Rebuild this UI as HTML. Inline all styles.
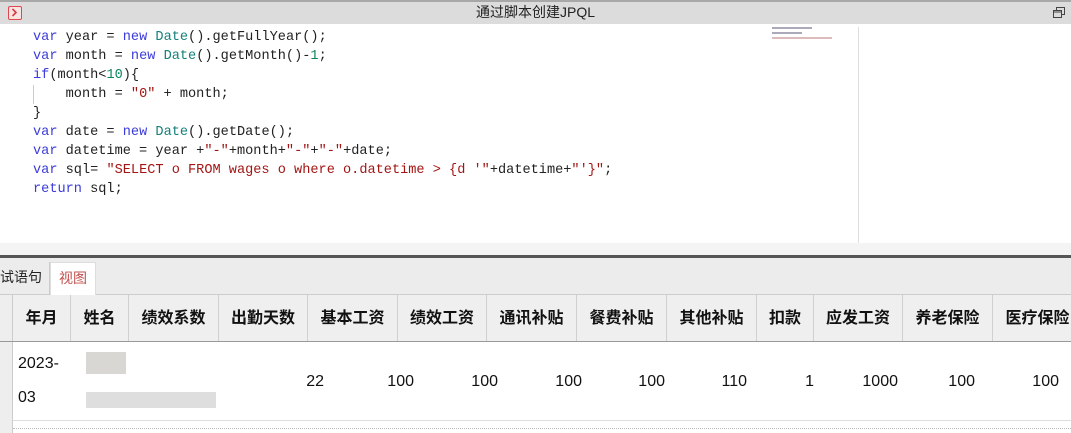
<!DOCTYPE html>
<html><head><meta charset="utf-8"><style>
*{margin:0;padding:0;box-sizing:border-box}
body{width:1071px;height:433px;overflow:hidden;background:#fff;position:relative;font-family:"Liberation Sans","Noto Sans CJK SC",sans-serif}
.abs{position:absolute}
#title{left:0;top:0;width:1071px;height:24px;background:#dcdcdc;border-top:2px solid #a8a8a8;font-size:14px;text-align:center;line-height:21px;color:#222}
.code{position:absolute;left:33px;font-family:"Liberation Mono",monospace;font-size:13.6px;color:#222;white-space:pre;line-height:19px}
.k{color:#3b3bdc}.t{color:#16807a}.s{color:#a31515}.n{color:#098658}
.th{position:absolute;top:295px;height:46px;border-right:1px solid #d0d0d0;background:#efefef;font-weight:bold;font-size:16px;text-align:center;line-height:48px;color:#111}
.td{position:absolute;top:373px;font-size:16px;color:#111;text-align:right;line-height:18px}
</style></head><body>
<div id="title" class="abs">通过脚本创建JPQL</div>
<div class="abs" style="left:8px;top:6px;width:14px;height:14px;border:1.5px solid #e0474c;border-radius:2px;background:#fbe3e3"><svg width="11" height="11" style="position:absolute;left:0;top:0"><path d="M3.5 2 L7 5.5 L3.5 9" stroke="#d83a3f" stroke-width="1.6" fill="none"/></svg></div>
<svg class="abs" style="left:1053px;top:7px" width="12" height="12"><rect x="3.5" y="0.5" width="8" height="7" fill="none" stroke="#444"/><rect x="0.5" y="3.5" width="8" height="7" fill="#dcdcdc" stroke="#444"/><line x1="1" y1="5" x2="8" y2="5" stroke="#444"/></svg>
<div class="code" style="top:28px"><span class="k">var</span> year = <span class="k">new</span> <span class="t">Date</span>().getFullYear();
<span class="k">var</span> month = <span class="k">new</span> <span class="t">Date</span>().getMonth()-<span class="n">1</span>;
<span class="k">if</span>(month&lt;<span class="n">10</span>){
    month = <span class="s">"0"</span> + month;
}
<span class="k">var</span> date = <span class="k">new</span> <span class="t">Date</span>().getDate();
<span class="k">var</span> datetime = year +<span class="s">"-"</span>+month+<span class="s">"-"</span>+<span class="s">"-"</span>+date;
<span class="k">var</span> sql= <span class="s">"SELECT o FROM wages o where o.datetime &gt; {d '"</span>+datetime+<span class="s">"'}"</span>;
<span class="k">return</span> sql;</div>
<div class="abs" style="left:33px;top:85px;width:1px;height:19px;background:#ccc"></div>
<div class="abs" style="left:772px;top:27px;width:40px;height:2px;background:#aab"></div>
<div class="abs" style="left:772px;top:32px;width:30px;height:2px;background:#aab"></div>
<div class="abs" style="left:772px;top:37px;width:60px;height:2px;background:#dbb"></div>
<div class="abs" style="left:858px;top:27px;width:1px;height:216px;background:#ddd"></div>
<div class="abs" style="left:0;top:243px;width:1071px;height:12px;background:#f4f4f4"></div>
<div class="abs" style="left:0;top:255px;width:1071px;height:3px;background:#555"></div>
<div class="abs" style="left:0;top:258px;width:1071px;height:37px;background:#ececec;border-bottom:1px solid #ccc"></div>
<div class="abs" style="left:0;top:262px;width:50px;height:32px;font-size:14px;line-height:30px;color:#222;border-right:1px solid #ccc">试语句</div>
<div class="abs" style="left:50px;top:262px;width:46px;height:33px;background:#fff;border:1px solid #ddd;border-bottom:none;font-size:14px;line-height:30px;color:#c0504d;text-align:center">视图</div>
<div class="abs" style="left:0;top:295px;width:13px;height:138px;background:#eee;border-right:1px solid #ccc"></div>
<div class="abs" style="left:0;top:341px;width:1071px;height:1px;background:#999"></div>
<div class="th" style="left:13px;width:58px">年月</div>
<div class="th" style="left:71px;width:58px">姓名</div>
<div class="th" style="left:129px;width:90px">绩效系数</div>
<div class="th" style="left:219px;width:89px">出勤天数</div>
<div class="th" style="left:308px;width:90px">基本工资</div>
<div class="th" style="left:398px;width:89px">绩效工资</div>
<div class="th" style="left:487px;width:90px">通讯补贴</div>
<div class="th" style="left:577px;width:90px">餐费补贴</div>
<div class="th" style="left:667px;width:90px">其他补贴</div>
<div class="th" style="left:757px;width:57px">扣款</div>
<div class="th" style="left:814px;width:89px">应发工资</div>
<div class="th" style="left:903px;width:90px">养老保险</div>
<div class="th" style="left:993px;width:90px">医疗保险</div>
<div class="abs" style="left:18px;top:347px;font-size:16px;line-height:34px;color:#111">2023-<br>03</div>
<div class="abs" style="left:86px;top:352px;width:40px;height:22px;background:#c8c6c0;opacity:.7"></div>
<div class="abs" style="left:86px;top:392px;width:130px;height:16px;background:#c8c8c8;opacity:.6"></div>
<div class="td" style="left:280px;width:44px">22</div>
<div class="td" style="left:370px;width:44px">100</div>
<div class="td" style="left:454px;width:44px">100</div>
<div class="td" style="left:538px;width:44px">100</div>
<div class="td" style="left:621px;width:44px">100</div>
<div class="td" style="left:703px;width:44px">110</div>
<div class="td" style="left:770px;width:44px">1</div>
<div class="td" style="left:854px;width:44px">1000</div>
<div class="td" style="left:931px;width:44px">100</div>
<div class="td" style="left:1015px;width:44px">100</div>
<div class="abs" style="left:13px;top:420px;width:1058px;height:1px;background:#ddd"></div>
<div class="abs" style="left:13px;top:428px;width:1058px;height:1px;border-top:1px dotted #bbb"></div>
</body></html>
